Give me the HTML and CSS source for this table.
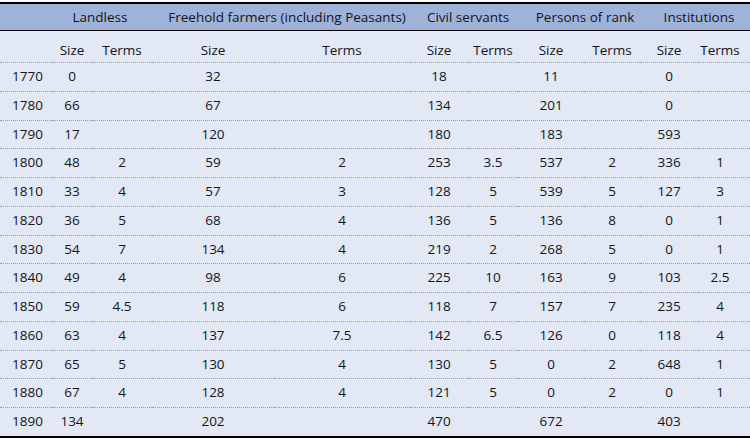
FILE: index.html
```html
<!DOCTYPE html>
<html lang="en">
<head>
<meta charset="utf-8">
<title>Table</title>
<link rel="stylesheet" href="styles.css">
</head>
<body>
<table class="data">
  <colgroup>
    <col class="c-year"><col class="c1"><col class="c2"><col class="c3"><col class="c4"><col class="c5"><col class="c6"><col class="c7"><col class="c8"><col class="c9"><col class="c10">
  </colgroup>
  <thead>
    <tr class="groups">
      <th></th>
      <th colspan="2" class="g-land">Landless</th>
      <th colspan="2" class="g-free">Freehold farmers (including Peasants)</th>
      <th colspan="2" class="g-civil">Civil servants</th>
      <th colspan="2" class="g-rank">Persons of rank</th>
      <th colspan="2" class="g-inst">Institutions</th>
    </tr>
    <tr class="subs">
      <th></th>
      <th>Size</th><th>Terms</th>
      <th>Size</th><th>Terms</th>
      <th>Size</th><th>Terms</th>
      <th>Size</th><th>Terms</th>
      <th>Size</th><th class="last">Terms</th>
    </tr>
  </thead>
  <tbody>
    <tr><td class="year">1770</td><td>0</td><td></td><td>32</td><td></td><td>18</td><td></td><td>11</td><td></td><td>0</td><td class="last"></td></tr>
    <tr><td class="year">1780</td><td>66</td><td></td><td>67</td><td></td><td>134</td><td></td><td>201</td><td></td><td>0</td><td class="last"></td></tr>
    <tr><td class="year">1790</td><td>17</td><td></td><td>120</td><td></td><td>180</td><td></td><td>183</td><td></td><td>593</td><td class="last"></td></tr>
    <tr><td class="year">1800</td><td>48</td><td>2</td><td>59</td><td>2</td><td>253</td><td>3.5</td><td>537</td><td>2</td><td>336</td><td class="last">1</td></tr>
    <tr><td class="year">1810</td><td>33</td><td>4</td><td>57</td><td>3</td><td>128</td><td>5</td><td>539</td><td>5</td><td>127</td><td class="last">3</td></tr>
    <tr><td class="year">1820</td><td>36</td><td>5</td><td>68</td><td>4</td><td>136</td><td>5</td><td>136</td><td>8</td><td>0</td><td class="last">1</td></tr>
    <tr><td class="year">1830</td><td>54</td><td>7</td><td>134</td><td>4</td><td>219</td><td>2</td><td>268</td><td>5</td><td>0</td><td class="last">1</td></tr>
    <tr><td class="year">1840</td><td>49</td><td>4</td><td>98</td><td>6</td><td>225</td><td>10</td><td>163</td><td>9</td><td>103</td><td class="last">2.5</td></tr>
    <tr><td class="year">1850</td><td>59</td><td>4.5</td><td>118</td><td>6</td><td>118</td><td>7</td><td>157</td><td>7</td><td>235</td><td class="last">4</td></tr>
    <tr><td class="year">1860</td><td>63</td><td>4</td><td>137</td><td>7.5</td><td>142</td><td>6.5</td><td>126</td><td>0</td><td>118</td><td class="last">4</td></tr>
    <tr><td class="year">1870</td><td>65</td><td>5</td><td>130</td><td>4</td><td>130</td><td>5</td><td>0</td><td>2</td><td>648</td><td class="last">1</td></tr>
    <tr><td class="year">1880</td><td>67</td><td>4</td><td>128</td><td>4</td><td>121</td><td>5</td><td>0</td><td>2</td><td>0</td><td class="last">1</td></tr>
    <tr><td class="year">1890</td><td>134</td><td></td><td>202</td><td></td><td>470</td><td></td><td>672</td><td></td><td>403</td><td class="last"></td></tr>
  </tbody>
</table>
</body>
</html>
```
FILE: styles.css
```css
html, body {
  margin: 0;
  padding: 0;
  background: #ffffff;
}

body {
  padding-top: 2px;
  font-family: "Open Sans", "Noto Sans", sans-serif;
  font-size: 13.5px;
  font-weight: 500;
  color: #14141c;
}

.data {
  width: 750px;
  table-layout: fixed;
  border-collapse: separate;
  border-spacing: 0;
  background: #e2e8f4;
}

.c-year { width: 52px; }
.c1 { width: 40px; }
.c2 { width: 60px; }
.c3 { width: 122px; }
.c4 { width: 136px; }
.c5 { width: 58px; }
.c6 { width: 50px; }
.c7 { width: 66px; }
.c8 { width: 56px; }
.c9 { width: 58px; }
.c10 { width: 52px; }

.data th,
.data td {
  font-weight: 500;
  text-align: center;
  white-space: nowrap;
  padding: 0;
}

.groups th {
  background: #9fb3d9;
  border-top: 2px solid #000;
  border-bottom: 1px solid #000;
  line-height: 18px;
  padding-top: 4px;
  padding-bottom: 4px;
}

.groups .g-land { padding-right: 4px; }
.groups .g-free { padding-left: 12px; }
.groups .g-civil { padding-left: 8px; }
.groups .g-rank { padding-left: 12px; }
.groups .g-inst { padding-left: 8px; }

.subs th {
  line-height: 18px;
  padding-top: 10px;
  padding-bottom: 3px;
  border-bottom: 1px dotted #9a9ea6;
}

.data td {
  line-height: 17.77px;
  padding-top: 5px;
  padding-bottom: 5px;
  border-bottom: 1px dotted #9a9ea6;
}

.data tbody tr:last-child td {
  border-bottom: 2px solid #000;
}

.data td.year {
  text-align: left;
  padding-left: 12px;
}

.data .last {
  padding-right: 8px;
}
```
